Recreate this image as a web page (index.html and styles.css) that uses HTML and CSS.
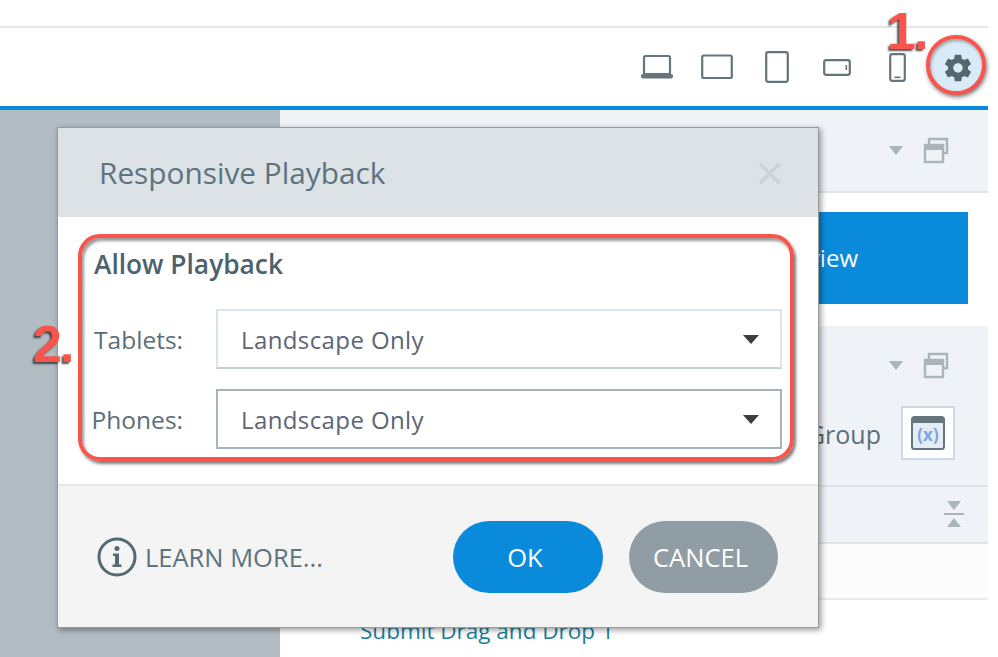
FILE: index.html
```html
<!DOCTYPE html>
<html lang="en">
<head>
  <meta charset="UTF-8" />
  <title>Responsive Playback</title>
  <link rel="stylesheet" href="styles.css">
</head>
<body>
  <div class="pagina">
    <header class="barra">
      <div class="barra-linea"></div>
      <nav class="dispositivos">
        <span class="celda">
          <svg width="34" height="26" viewBox="0 0 34 26"><rect x="4" y="2" width="26" height="18" rx="1.5" fill="none" stroke="#65757d" stroke-width="2.2"/><rect x="1" y="20" width="32" height="4.5" rx="2" fill="#65757d"/></svg>
        </span>
        <span class="celda">
          <svg width="32" height="26" viewBox="0 0 32 26"><rect x="1.2" y="1.5" width="29.6" height="22.5" rx="1.5" fill="none" stroke="#65757d" stroke-width="2.2"/></svg>
        </span>
        <span class="celda">
          <svg width="24" height="32" viewBox="0 0 24 32"><rect x="1.2" y="1.2" width="21.6" height="29.6" rx="2" fill="none" stroke="#65757d" stroke-width="2.2"/></svg>
        </span>
        <span class="celda">
          <svg width="28" height="17" viewBox="0 0 28 17"><rect x="1.2" y="1.2" width="25.6" height="14.6" rx="2" fill="none" stroke="#65757d" stroke-width="2.2"/><rect x="22.5" y="6" width="1.6" height="5" fill="#65757d"/></svg>
        </span>
        <span class="celda">
          <svg width="17" height="29" viewBox="0 0 17 29"><rect x="1.2" y="1.2" width="14.6" height="26.6" rx="2" fill="none" stroke="#65757d" stroke-width="2.2"/><rect x="5.500" y="23.5" width="6" height="1.6" fill="#65757d"/></svg>
        </span>
        <span class="celda celda-ajustes">
          <svg width="32" height="32" viewBox="0 0 24 24"><path fill="#55676f" d="M19.43 12.98c.04-.32.07-.64.07-.98s-.03-.66-.07-.98l2.11-1.65c.19-.15.24-.42.12-.64l-2-3.46c-.12-.22-.39-.3-.61-.22l-2.49 1c-.52-.4-1.08-.73-1.69-.98l-.38-2.65C14.46 2.18 14.25 2 14 2h-4c-.25 0-.46.18-.49.42l-.38 2.65c-.61.25-1.17.59-1.69.98l-2.49-1c-.23-.09-.49 0-.61.22l-2 3.46c-.13.22-.07.49.12.64l2.11 1.65c-.04.32-.07.65-.07.98s.03.66.07.98l-2.11 1.65c-.19.15-.24.42-.12.64l2 3.46c.12.22.39.3.61.22l2.49-1c.52.4 1.08.73 1.69.98l.38 2.65c.03.24.24.42.49.42h4c.25 0 .46-.18.49-.42l.38-2.65c.61-.25 1.17-.59 1.69-.98l2.49 1c.23.09.49 0 .61-.22l2-3.46c.12-.22.07-.49-.12-.64l-2.11-1.65zM12 15.5c-1.93 0-3.5-1.57-3.5-3.5s1.57-3.5 3.5-3.5 3.5 1.57 3.5 3.5-1.57 3.5-3.5 3.5z"/></svg>
        </span>
      </nav>
    </header>

    <main class="contenido">
      <aside class="lateral"></aside>
      <section class="panel">
        <div class="fila fila-cabecera">
          <span class="flechita"></span>
          <svg width="26" height="27" viewBox="0 0 26 27"><path fill="none" stroke="#aab5bc" stroke-width="2.4" d="M6 7V2h18v14h-4"/><rect x="2" y="8" width="18" height="17" fill="#eff3f7" stroke="#aab5bc" stroke-width="2.4"/><rect x="2" y="8" width="18" height="5" fill="#aab5bc"/></svg>
        </div>
        <div class="fila-vista">
          <div class="boton-vista">Preview</div>
        </div>
        <div class="fila fila-grupo">
          <div class="grupo-arriba">
            <span class="flechita"></span>
            <svg width="26" height="27" viewBox="0 0 26 27"><path fill="none" stroke="#aab5bc" stroke-width="2.4" d="M6 7V2h18v14h-4"/><rect x="2" y="8" width="18" height="17" fill="#eff3f7" stroke="#aab5bc" stroke-width="2.4"/><rect x="2" y="8" width="18" height="5" fill="#aab5bc"/></svg>
          </div>
          <div class="grupo-abajo">
            <span class="grupo-texto">Variable Group</span>
            <span class="caja-variable">
              <svg width="34" height="34" viewBox="0 0 34 34"><rect x="1" y="1" width="32" height="32" rx="2.5" fill="#e4edf6" stroke="#65757d" stroke-width="2"/><rect x="1" y="1" width="32" height="6" fill="#65757d"/><text x="17" y="25" text-anchor="middle" class="equis">(x)</text></svg>
            </span>
          </div>
        </div>
        <div class="fila fila-plegar">
          <svg width="20" height="27" viewBox="0 0 20 27"><path fill="#aab5bc" d="M3 0h14l-7 9zM10 17l7 9H3z"/><rect y="12" width="20" height="2" fill="#aab5bc"/></svg>
        </div>
        <div class="fila-vacia"></div>
        <div class="fila-enlace">Submit Drag and Drop 1</div>
      </section>
    </main>
  </div>

  <div class="dialogo">
    <div class="dialogo-cabecera">
      <h2>Responsive Playback</h2>
      <span class="cerrar">&times;</span>
    </div>
    <div class="dialogo-cuerpo">
      <div class="marco-rojo">
        <h3>Allow Playback</h3>
        <div class="opcion">
          <label>Tablets:</label>
          <div class="selector">Landscape Only<span class="flecha"></span></div>
        </div>
        <div class="opcion">
          <label>Phones:</label>
          <div class="selector selector-activo">Landscape Only<span class="flecha"></span></div>
        </div>
      </div>
    </div>
    <div class="dialogo-pie">
      <a class="aprender">
        <svg width="40" height="40" viewBox="0 0 40 40"><circle cx="20" cy="20" r="18" fill="none" stroke="#536a73" stroke-width="3"/><circle cx="20" cy="11.5" r="2.5" fill="#536a73"/><path fill="#536a73" d="M16 16.5h6v11h2.5v2.5h-9v-2.5H18v-8.500h-2z"/></svg>
        LEARN MORE...
      </a>
      <div class="botones">
        <button class="btn btn-ok">OK</button>
        <button class="btn btn-cancelar">CANCEL</button>
      </div>
    </div>
  </div>

  <span class="numero numero-uno">1.</span>
  <span class="numero numero-dos">2.</span>
</body>
</html>
```

FILE: styles.css
```css
body {
  margin: 0;
  height: 657px;
  overflow: hidden;
  background-color: #fff;
  font-family: "Open Sans", sans-serif;
  color: #5b6e78;
}

.pagina {
  width: 988px;
}

/* barra de arriba */
.barra {
  height: 110px;
  box-sizing: border-box;
  padding-top: 26px;
  border-bottom: 4px solid #0a8adb;
}
.barra-linea {
  height: 2px;
  background: #e3e8ea;
}
.dispositivos {
  display: flex;
  justify-content: flex-end;
  margin-top: 8px;
}
.celda {
  width: 60px;
  height: 62px;
  display: flex;
  align-items: center;
  justify-content: center;
}
.celda-ajustes {
  width: 60px;
  height: 60px;
  margin: -1px 2px 0 -1px;
  padding: 5px 0 0 4px;
  box-sizing: border-box;
  border: 4px solid #f9554c;
  border-radius: 50%;
  background: #d9ebf8;
  box-shadow: 1px 2px 4px rgba(0,0,0,0.55), inset 1px 2px 3px rgba(0,0,0,0.3);
}

/* contenido */
.contenido {
  display: flex;
  height: 547px;
}
.lateral {
  width: 280px;
  background: #b2bcc3;
}
.panel {
  flex: 1;
}
.fila {
  background: #eff3f7;
  border-bottom: 2px solid #dfe4e8;
}
.fila-cabecera {
  height: 81px;
  display: flex;
  align-items: center;
  justify-content: flex-end;
  padding-right: 39px;
  gap: 20px;
}
.flechita {
  width: 0;
  height: 0;
  border-left: 7px solid transparent;
  border-right: 7px solid transparent;
  border-top: 9px solid #aab5bc;
}
.fila-vista {
  height: 133px;
  padding: 19px 20px 0 20px;
  box-sizing: border-box;
}
.boton-vista {
  height: 92px;
  line-height: 92px;
  background: #0a8adb;
  color: #fff;
  font-size: 24px;
  text-align: right;
  padding-right: 110px;
}
.fila-grupo {
  height: 159px;
}
.grupo-arriba {
  display: flex;
  justify-content: flex-end;
  align-items: center;
  gap: 20px;
  padding: 26px 39px 0 0;
}
.grupo-abajo {
  display: flex;
  justify-content: flex-end;
  align-items: center;
  gap: 20px;
  padding: 27px 33px 0 0;
}
.grupo-texto {
  margin-top: 2px;
  font-size: 25px;
  color: #5b6e78;
}
.caja-variable {
  width: 54px;
  height: 54px;
  box-sizing: border-box;
  border: 2px solid #cdd8df;
  background: #fff;
  display: flex;
  align-items: center;
  justify-content: center;
}
.equis {
  font-family: "Open Sans", sans-serif;
  font-size: 17px;
  font-weight: bold;
  fill: #7fa3dc;
}
.fila-plegar {
  height: 55px;
  display: flex;
  align-items: center;
  justify-content: flex-end;
  padding-right: 24px;
}
.fila-vacia {
  height: 54px;
  background: #fcfcfc;
  border-bottom: 2px solid #e8ebed;
}
.fila-enlace {
  padding: 15px 0 0 80px;
  font-size: 22.5px;
  color: #1b7f9c;
}

/* dialogo */
.dialogo {
  position: absolute;
  left: 57px;
  top: 127px;
  width: 762px;
  height: 501px;
  box-sizing: border-box;
  display: flex;
  flex-direction: column;
  background: #fff;
  border: 1px solid #9a9a9a;
  box-shadow: 2px 2px 6px rgba(0,0,0,0.4);
}
.dialogo-cabecera {
  height: 89px;
  background: #dce2e6;
  display: flex;
  align-items: center;
  justify-content: space-between;
  padding: 0 38px 0 41px;
}
.dialogo-cabecera h2 {
  margin: 0;
  font-size: 29.8px;
  font-weight: normal;
  color: #5c7380;
}
.cerrar {
  font-size: 50px;
  line-height: 50px;
  color: #cfd2d4;
  margin: -2px -4px 0 0;
}
.dialogo-cuerpo {
  height: 269px;
  box-sizing: border-box;
  padding: 17px 24px 0 20px;
  border-bottom: 2px solid #e3e8ec;
}
.marco-rojo {
  height: 227px;
  box-sizing: border-box;
  border: 4px solid #f9554c;
  border-radius: 22px;
  box-shadow: 2px 3px 3px rgba(0,0,0,0.5), inset 2px 3px 3px rgba(0,0,0,0.4);
  padding: 8px 8px 0 0;
}
.marco-rojo h3 {
  margin: 0 0 27px 12px;
  font-size: 26.3px;
  line-height: 36px;
  font-weight: 600;
  color: #4d626d;
}
.opcion {
  display: flex;
  align-items: center;
  gap: 33px;
  margin-bottom: 20px;
}
.opcion label {
  width: 101px;
  text-align: right;
  font-size: 24.5px;
  color: #5b6e78;
}
.selector {
  flex: 1;
  height: 60px;
  box-sizing: border-box;
  border: 2px solid #dbe4ea;
  border-bottom-color: #c3ced6;
  padding-left: 23px;
  display: flex;
  align-items: center;
  justify-content: space-between;
  font-size: 24px;
  letter-spacing: 0.4px;
  color: #5b6578;
}
.selector-activo {
  border-color: #a3b3bf;
}
.flecha {
  width: 0;
  height: 0;
  margin-right: 21px;
  border-left: 8px solid transparent;
  border-right: 8px solid transparent;
  border-top: 9px solid #3e3e3e;
}
.dialogo-pie {
  flex: 1;
  background: #f4f4f4;
  display: flex;
  align-items: center;
  justify-content: space-between;
  padding: 0 40px 0 39px;
}
.aprender {
  display: flex;
  align-items: center;
  gap: 8px;
  font-size: 25.5px;
  color: #5b7380;
}
.botones {
  display: flex;
  gap: 26px;
}
.btn {
  width: 150px;
  height: 72px;
  padding: 0 6px 0 0;
  border: none;
  border-radius: 36px;
  color: #fff;
  font-family: "Open Sans", sans-serif;
  font-size: 25.5px;
}
.btn-ok {
  background: #0a8adb;
}
.btn-cancelar {
  width: 149px;
  background: #919da5;
}

/* numeros rojos encima */
.numero {
  position: absolute;
  font-family: "Liberation Sans", sans-serif;
  font-size: 52px;
  line-height: 52px;
  font-weight: bold;
  letter-spacing: -2px;
  color: #f9554c;
  text-shadow: -2px 2px 2px rgba(40,40,40,0.8);
}
.numero-uno {
  left: 887px;
  top: 5px;
}
.numero-dos {
  left: 33px;
  top: 318px;
}
```
